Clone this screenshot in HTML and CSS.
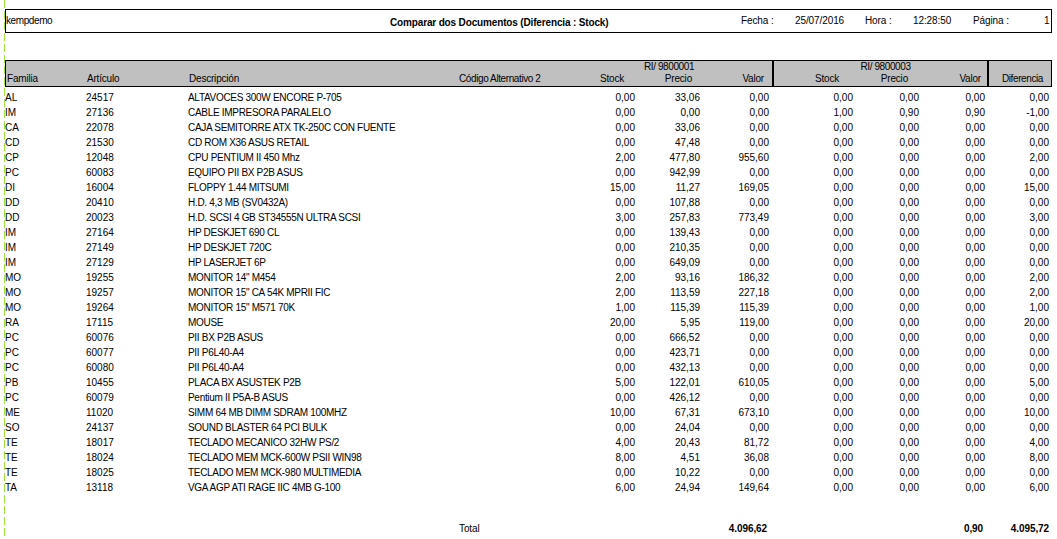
FILE: index.html
```html
<!DOCTYPE html>
<html>
<head>
  <title>Comparar dos Documentos</title>
  <link rel="stylesheet" href="styles.css">
</head>
<body>
  <div class="top-box">
    <span class="user">kempdemo</span>
    <span class="title">Comparar dos Documentos (Diferencia : Stock)</span>
    <span>Fecha :</span>
    <span>25/07/2016</span>
    <span>Hora :</span>
    <span>12:28:50</span>
    <span>Página :</span>
    <span class="page-num">1</span>
  </div>

  <div class="head">
    <div class="head-info">
      <span>Familia</span>
      <span>Artículo</span>
      <span>Descripción</span>
      <span>Código Alternativo 2</span>
    </div>
    <div class="head-group group-a">
      <div class="group-title">RI/ 9800001</div>
      <div class="group-cols">
        <span>Stock</span>
        <span>Precio</span>
        <span>Valor</span>
      </div>
    </div>
    <div class="head-group group-b">
      <div class="group-title">RI/ 9800003</div>
      <div class="group-cols">
        <span>Stock</span>
        <span>Precio</span>
        <span>Valor</span>
      </div>
    </div>
    <div class="head-dif">Diferencia</div>
  </div>

  <div class="rows">
    <div class="row"><span>AL</span><span>24517</span><span>ALTAVOCES 300W ENCORE P-705</span><span></span><span>0,00</span><span>33,06</span><span>0,00</span><span>0,00</span><span>0,00</span><span>0,00</span><span>0,00</span></div>
    <div class="row"><span>IM</span><span>27136</span><span>CABLE IMPRESORA PARALELO</span><span></span><span>0,00</span><span>0,00</span><span>0,00</span><span>1,00</span><span>0,90</span><span>0,90</span><span>-1,00</span></div>
    <div class="row"><span>CA</span><span>22078</span><span>CAJA SEMITORRE ATX TK-250C CON FUENTE</span><span></span><span>0,00</span><span>33,06</span><span>0,00</span><span>0,00</span><span>0,00</span><span>0,00</span><span>0,00</span></div>
    <div class="row"><span>CD</span><span>21530</span><span>CD ROM X36 ASUS RETAIL</span><span></span><span>0,00</span><span>47,48</span><span>0,00</span><span>0,00</span><span>0,00</span><span>0,00</span><span>0,00</span></div>
    <div class="row"><span>CP</span><span>12048</span><span>CPU PENTIUM II 450 Mhz</span><span></span><span>2,00</span><span>477,80</span><span>955,60</span><span>0,00</span><span>0,00</span><span>0,00</span><span>2,00</span></div>
    <div class="row"><span>PC</span><span>60083</span><span>EQUIPO PII BX P2B ASUS</span><span></span><span>0,00</span><span>942,99</span><span>0,00</span><span>0,00</span><span>0,00</span><span>0,00</span><span>0,00</span></div>
    <div class="row"><span>DI</span><span>16004</span><span>FLOPPY 1.44 MITSUMI</span><span></span><span>15,00</span><span>11,27</span><span>169,05</span><span>0,00</span><span>0,00</span><span>0,00</span><span>15,00</span></div>
    <div class="row"><span>DD</span><span>20410</span><span>H.D. 4,3 MB (SV0432A)</span><span></span><span>0,00</span><span>107,88</span><span>0,00</span><span>0,00</span><span>0,00</span><span>0,00</span><span>0,00</span></div>
    <div class="row"><span>DD</span><span>20023</span><span>H.D. SCSI 4 GB ST34555N ULTRA SCSI</span><span></span><span>3,00</span><span>257,83</span><span>773,49</span><span>0,00</span><span>0,00</span><span>0,00</span><span>3,00</span></div>
    <div class="row"><span>IM</span><span>27164</span><span>HP DESKJET 690 CL</span><span></span><span>0,00</span><span>139,43</span><span>0,00</span><span>0,00</span><span>0,00</span><span>0,00</span><span>0,00</span></div>
    <div class="row"><span>IM</span><span>27149</span><span>HP DESKJET 720C</span><span></span><span>0,00</span><span>210,35</span><span>0,00</span><span>0,00</span><span>0,00</span><span>0,00</span><span>0,00</span></div>
    <div class="row"><span>IM</span><span>27129</span><span>HP LASERJET 6P</span><span></span><span>0,00</span><span>649,09</span><span>0,00</span><span>0,00</span><span>0,00</span><span>0,00</span><span>0,00</span></div>
    <div class="row"><span>MO</span><span>19255</span><span>MONITOR 14" M454</span><span></span><span>2,00</span><span>93,16</span><span>186,32</span><span>0,00</span><span>0,00</span><span>0,00</span><span>2,00</span></div>
    <div class="row"><span>MO</span><span>19257</span><span>MONITOR 15" CA 54K MPRII FIC</span><span></span><span>2,00</span><span>113,59</span><span>227,18</span><span>0,00</span><span>0,00</span><span>0,00</span><span>2,00</span></div>
    <div class="row"><span>MO</span><span>19264</span><span>MONITOR 15" M571 70K</span><span></span><span>1,00</span><span>115,39</span><span>115,39</span><span>0,00</span><span>0,00</span><span>0,00</span><span>1,00</span></div>
    <div class="row"><span>RA</span><span>17115</span><span>MOUSE</span><span></span><span>20,00</span><span>5,95</span><span>119,00</span><span>0,00</span><span>0,00</span><span>0,00</span><span>20,00</span></div>
    <div class="row"><span>PC</span><span>60076</span><span>PII BX P2B ASUS</span><span></span><span>0,00</span><span>666,52</span><span>0,00</span><span>0,00</span><span>0,00</span><span>0,00</span><span>0,00</span></div>
    <div class="row"><span>PC</span><span>60077</span><span>PII P6L40-A4</span><span></span><span>0,00</span><span>423,71</span><span>0,00</span><span>0,00</span><span>0,00</span><span>0,00</span><span>0,00</span></div>
    <div class="row"><span>PC</span><span>60080</span><span>PII P6L40-A4</span><span></span><span>0,00</span><span>432,13</span><span>0,00</span><span>0,00</span><span>0,00</span><span>0,00</span><span>0,00</span></div>
    <div class="row"><span>PB</span><span>10455</span><span>PLACA BX ASUSTEK P2B</span><span></span><span>5,00</span><span>122,01</span><span>610,05</span><span>0,00</span><span>0,00</span><span>0,00</span><span>5,00</span></div>
    <div class="row"><span>PC</span><span>60079</span><span>Pentium II P5A-B ASUS</span><span></span><span>0,00</span><span>426,12</span><span>0,00</span><span>0,00</span><span>0,00</span><span>0,00</span><span>0,00</span></div>
    <div class="row"><span>ME</span><span>11020</span><span>SIMM 64 MB DIMM SDRAM 100MHZ</span><span></span><span>10,00</span><span>67,31</span><span>673,10</span><span>0,00</span><span>0,00</span><span>0,00</span><span>10,00</span></div>
    <div class="row"><span>SO</span><span>24137</span><span>SOUND BLASTER 64 PCI BULK</span><span></span><span>0,00</span><span>24,04</span><span>0,00</span><span>0,00</span><span>0,00</span><span>0,00</span><span>0,00</span></div>
    <div class="row"><span>TE</span><span>18017</span><span>TECLADO MECANICO 32HW PS/2</span><span></span><span>4,00</span><span>20,43</span><span>81,72</span><span>0,00</span><span>0,00</span><span>0,00</span><span>4,00</span></div>
    <div class="row"><span>TE</span><span>18024</span><span>TECLADO MEM MCK-600W PSII WIN98</span><span></span><span>8,00</span><span>4,51</span><span>36,08</span><span>0,00</span><span>0,00</span><span>0,00</span><span>8,00</span></div>
    <div class="row"><span>TE</span><span>18025</span><span>TECLADO MEM MCK-980 MULTIMEDIA</span><span></span><span>0,00</span><span>10,22</span><span>0,00</span><span>0,00</span><span>0,00</span><span>0,00</span><span>0,00</span></div>
    <div class="row"><span>TA</span><span>13118</span><span>VGA AGP ATI RAGE IIC 4MB G-100</span><span></span><span>6,00</span><span>24,94</span><span>149,64</span><span>0,00</span><span>0,00</span><span>0,00</span><span>6,00</span></div>
  </div>

  <div class="row total">
    <span></span><span></span><span></span><span class="total-label">Total</span><span></span><span></span><span class="total-valor">4.096,62</span><span></span><span></span><span class="total-valor">0,90</span><span>4.095,72</span>
  </div>
</body>
</html>
```

FILE: styles.css
```css
html, body {
  height: 100%;
}

body {
  margin: 0;
  padding: 9px 5px 0 5px;
  box-sizing: border-box;
  overflow: hidden;
  font-family: "Liberation Sans", Arial, sans-serif;
  font-size: 10px;
  line-height: 15px;
  color: #000;
  background-color: #fff;
  background-image: repeating-linear-gradient(to bottom, #9ee43a 0, #9ee43a 8px, transparent 8px, transparent 11px);
  background-size: 1px 100%;
  background-position: 4px 0;
  background-repeat: no-repeat;
}

.top-box {
  display: grid;
  grid-template-columns: 384px 351px 54px 70px 48px 60px 71px 1fr;
  align-items: center;
  height: 24px;
  box-sizing: border-box;
  border: 1px solid #000;
  padding-bottom: 2px;
  margin-bottom: 27px;
  letter-spacing: -0.1px;
}

.user {
  letter-spacing: -0.4px;
}

.title {
  font-weight: bold;
  letter-spacing: -0.15px;
  padding-top: 4px;
}

.page-num {
  text-align: right;
  padding-right: 9px;
}

.head {
  display: flex;
  height: 27px;
  box-sizing: border-box;
  border: 1px solid #000;
  background-color: #c0c0c0;
  margin-bottom: 3px;
  letter-spacing: -0.2px;
}

.head-info {
  width: 560px;
  display: grid;
  grid-template-columns: 80px 102px 270px 1fr;
  align-items: end;
  padding-left: 1px;
  box-sizing: border-box;
}

.head-info span:last-child {
  letter-spacing: -0.4px;
}

.head-group {
  text-align: center;
  box-sizing: border-box;
}

.group-a {
  width: 206px;
}

.group-b {
  width: 215px;
  border-left: 2px solid #000;
  padding-left: 10px;
}

.group-title {
  line-height: 12px;
  letter-spacing: -0.4px;
}

.group-cols {
  display: grid;
  text-align: right;
  margin-top: -2px;
}

.group-a .group-cols {
  grid-template-columns: 58px 68px 72px;
}

.group-b .group-cols {
  grid-template-columns: 55px 69px 73px;
}

.head-dif {
  flex: 1;
  border-left: 2px solid #000;
  text-align: right;
  padding: 10px 8px 0 0;
  letter-spacing: -0.4px;
}

.row {
  display: grid;
  grid-template-columns: 81px 102px 271px 130px 46px 65px 69px 84px 66px 66px 64px;
  height: 15px;
}

.row span:nth-child(3) {
  letter-spacing: -0.3px;
}

.row span:nth-child(n+5) {
  text-align: right;
}

.total {
  margin-top: 26px;
  font-weight: bold;
  letter-spacing: -0.1px;
}

.total-label {
  font-weight: normal;
}

.total-valor {
  padding-right: 2px;
}
```
